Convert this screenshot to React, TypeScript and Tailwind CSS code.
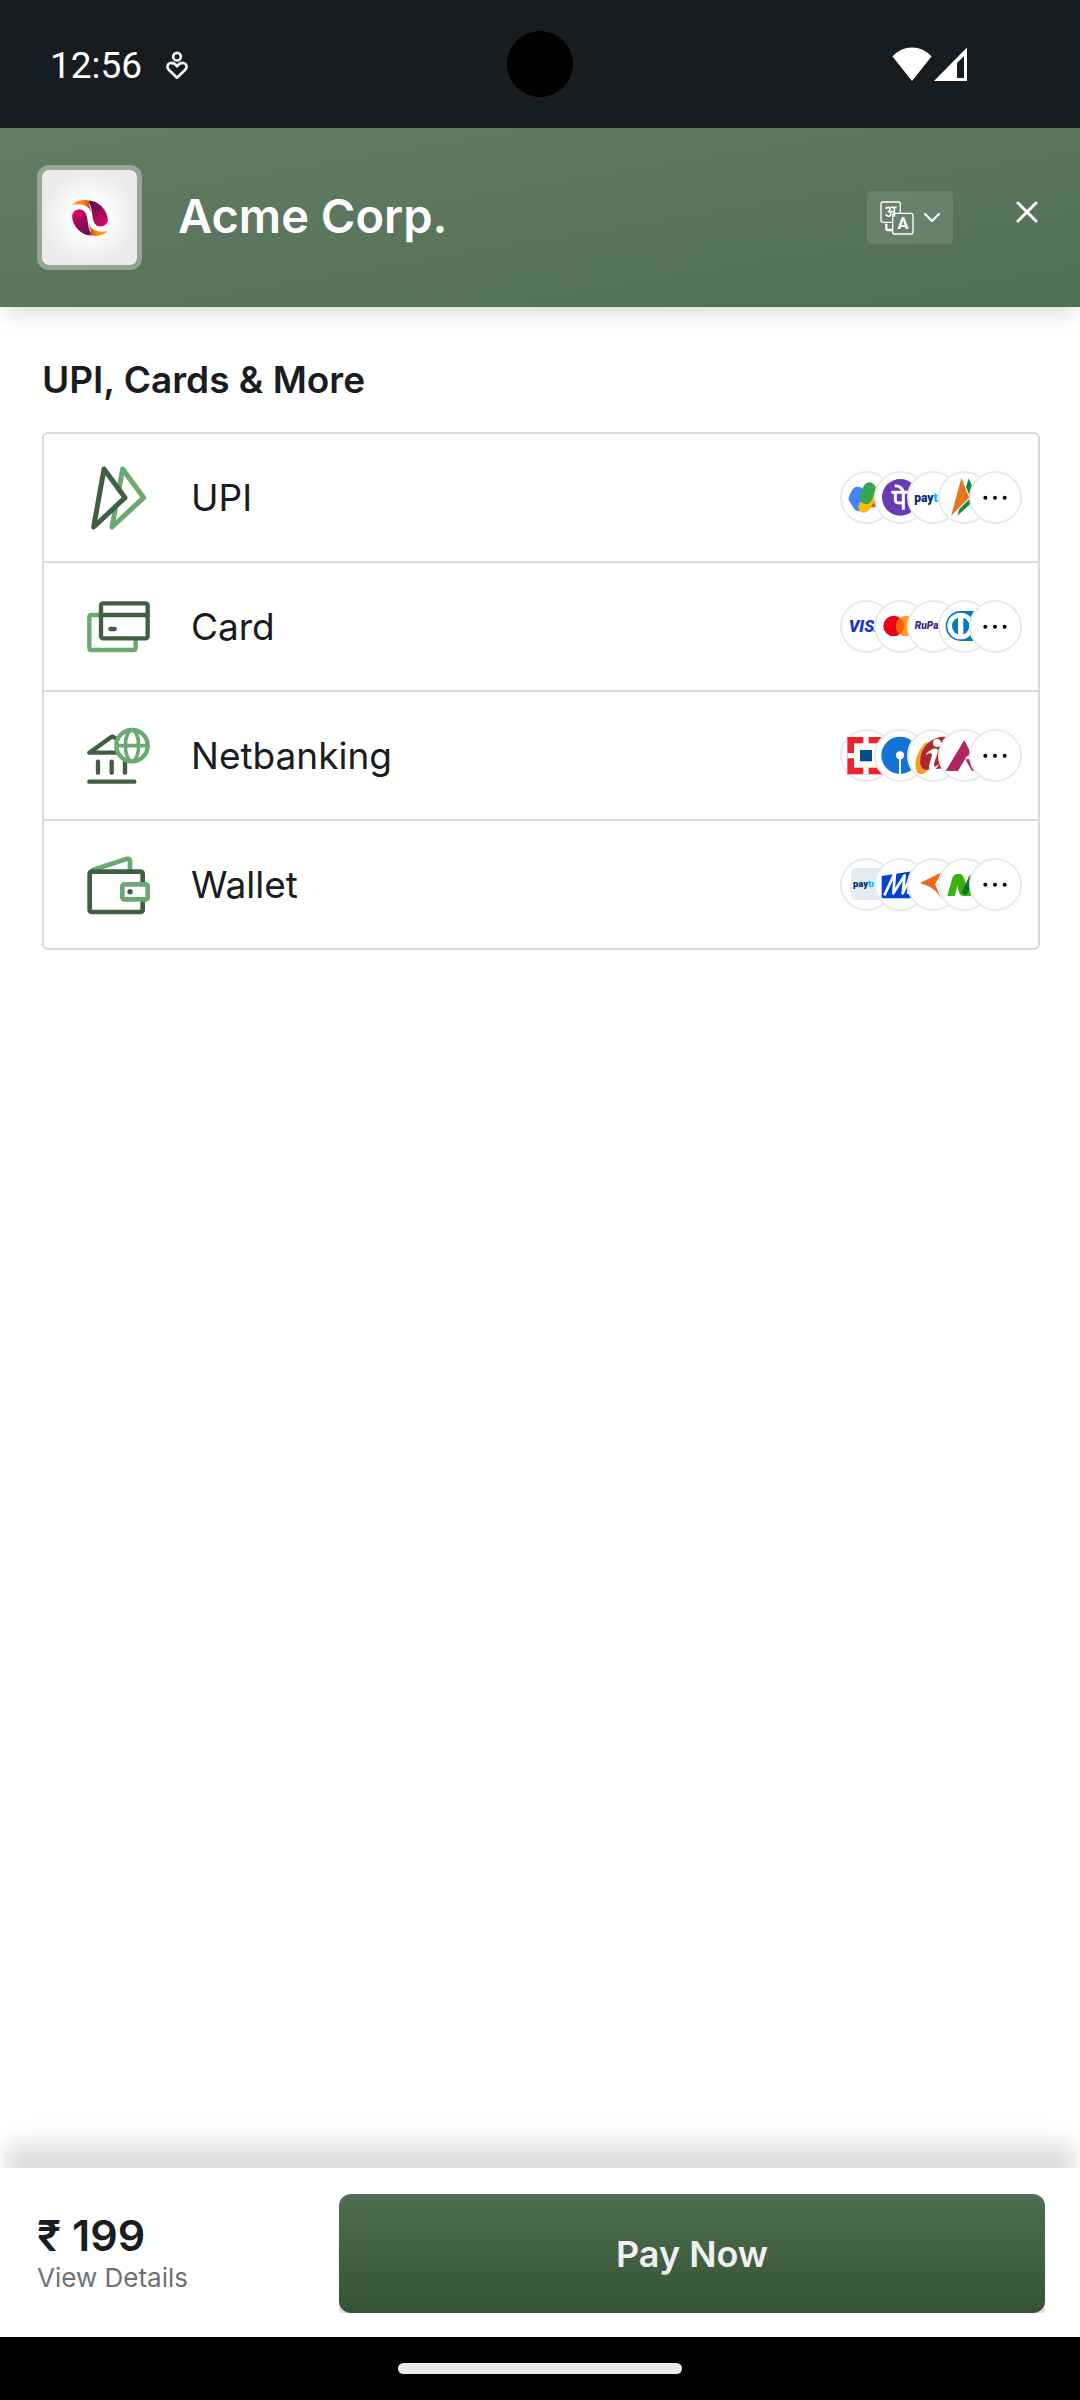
import type { ReactNode } from "react";

const DARK = "#3f6040";
const LIGHT = "#6ca871";

function HealthIcon() {
  return (
    <svg className="h-[30px] w-[22px]" viewBox="0 0 66 90" fill="none" stroke="#f4f4f4" strokeWidth="8" aria-hidden="true">
      <circle cx="33" cy="17" r="11.5" />
      <path d="M33 80 L9 57 C1 49 4 38 14 36 C23 35 28 39 33 46 C38 39 43 35 52 36 C62 38 65 49 57 57 Z" strokeLinejoin="round" />
    </svg>
  );
}

function WifiIcon() {
  return (
    <svg className="h-[34px] w-[40px]" viewBox="0 0 40 34" fill="#fff" aria-hidden="true">
      <path d="M20 34 L0.5 9.5 Q8.500 0.500 20 0.500 T39.500 9.500 Z" />
    </svg>
  );
}

function SignalIcon() {
  return (
    <svg className="h-[34px] w-[33px]" viewBox="0 0 33 34" aria-hidden="true">
      <path fill="#fff" fillRule="evenodd" d="M33 0.500 V34 H0 Z M23 16 V31 H30 V9 Z" />
    </svg>
  );
}

function BrandMark() {
  return (
    <svg className="size-9" viewBox="0 0 108 109" aria-hidden="true">
      <defs>
        <linearGradient id="brandOrange" x1="0" x2="1">
          <stop offset="0" stopColor="#ffa814" />
          <stop offset="0.6" stopColor="#fb8011" />
          <stop offset="1" stopColor="#d5281c" />
        </linearGradient>
        <linearGradient id="brandPink" x1="0.15" y1="0" x2="0.8" y2="1">
          <stop offset="0" stopColor="#52154c" />
          <stop offset="0.6" stopColor="#a3095a" />
          <stop offset="1" stopColor="#ea0067" />
        </linearGradient>
        <g id="brandHalf">
          <path fill="url(#brandPink)" d="M48 2 C80 0 108 32 108 60 C108 72 98 80 86 80 C70 80 64 66 62 52 C60 34 58 18 48 2 Z" />
          <path fill="url(#brandOrange)" d="M0 15 C14 0 36 -2 53 2 C49 14 55 26 59 38 C48 14 26 10 0 15 Z" />
        </g>
      </defs>
      <use href="#brandHalf" />
      <use href="#brandHalf" transform="rotate(180 54 54.500)" />
    </svg>
  );
}

function TranslateIcon() {
  return (
    <svg className="h-[34px] w-[34px]" viewBox="0 0 102 102" fill="none" stroke="#fff" strokeWidth="4" aria-hidden="true">
      <path d="M38 64 H9 Q3 64 3 58 V9 Q3 3 9 3 H55 Q61 3 61 9 V36" />
      <g strokeWidth="5">
        <path d="M17 23 C21 17 31 18 30 26 C30 30 26 31 23 31 C30 31 34 35 32 41 C30 48 20 47 17 39" />
        <path d="M31 32 H43 M32 19 H50 M43 19 V47" />
      </g>
      <path d="M19 68 V83 Q19 87 23 87 H37" strokeWidth="7" />
      <rect x="38" y="37" width="61" height="62" rx="6" />
      <text x="69" y="85" fill="#fff" stroke="none" textAnchor="middle" fontFamily="Roboto, sans-serif" fontWeight="700" fontSize="49">A</text>
    </svg>
  );
}

function UpiIcon() {
  return (
    <svg className="size-16" viewBox="0 0 192 192" fill="none" strokeWidth="15" strokeLinejoin="round" aria-hidden="true">
      <path stroke={LIGHT} d="M107 9 L170 95 L75 183 Z" />
      <path stroke={DARK} fill="#fff" d="M51 9 L114 95 L20 183 Z" />
    </svg>
  );
}

function CardIcon() {
  return (
    <svg className="size-16" viewBox="0 0 192 192" fill="none" strokeWidth="13" strokeLinejoin="round" strokeLinecap="round" aria-hidden="true">
      <path stroke={LIGHT} d="M36 60 H14 Q7 60 7 67 V158 Q7 165 14 165 H139 Q146 165 146 158 V132" />
      <rect stroke={DARK} fill="#fff" x="42" y="25" width="140" height="105" rx="6" />
      <path stroke={DARK} d="M42 60 H182 M70 102 H83" />
    </svg>
  );
}

function BankIcon() {
  return (
    <svg className="size-16" viewBox="0 0 192 192" fill="none" strokeWidth="13" strokeLinejoin="round" strokeLinecap="round" aria-hidden="true">
      <path stroke={DARK} d="M100 51 L77 38 L74 38 L7 86 H95 M33 113 V146 M74 113 V146 M114 113 V146 M7 173 H142" />
      <circle stroke={LIGHT} fill="#fff" cx="135" cy="65" r="47" />
      <ellipse stroke={LIGHT} strokeWidth="11" cx="135" cy="65" rx="20" ry="47" />
      <path stroke={LIGHT} strokeWidth="11" d="M88 65 H182" />
    </svg>
  );
}

function WalletIcon() {
  return (
    <svg className="size-16" viewBox="0 0 192 192" fill="none" strokeWidth="14" strokeLinejoin="round" strokeLinecap="round" aria-hidden="true">
      <path stroke={LIGHT} d="M18 51 L118 18 Q128 15 129 23 V51" />
      <rect stroke={DARK} fill="#fff" x="8" y="56" width="159" height="121" rx="6" />
      <rect stroke={LIGHT} fill="#fff" x="106" y="94" width="76" height="45" rx="6" />
      <circle cx="129" cy="116" r="8" fill={DARK} />
    </svg>
  );
}

const logos: Record<string, ReactNode> = {
  googlePay: (
    <g fill="none" strokeLinecap="round" strokeLinejoin="round">
      <path d="M106 66 L98 90" stroke="#ea4335" strokeWidth="38" />
      <path d="M72 104 L94 66" stroke="#fbbc04" strokeWidth="38" />
      <path d="M53 66 L45 82 L58 102" stroke="#4285f4" strokeWidth="38" />
      <path d="M72 108 L98 70" stroke="#fbbc04" strokeWidth="34" />
      <path d="M88 53 L78 80" stroke="#34a853" strokeWidth="38" />
    </g>
  ),
  phonePe: (
    <g fill="none">
      <circle cx="79" cy="79" r="55" fill="#673ab7" />
      <g stroke="#fff" strokeWidth="9">
        <path d="M52 64 H108 M88 64 V116 M64 64 V86 Q64 100 88 94" />
        <path d="M62 44 Q82 44 88 62" />
      </g>
    </g>
  ),
  paytm: (
    <text x="22" y="93" fontFamily="Roboto, sans-serif" fontWeight="900" fontSize="36" fill="#002e6e">
      pay<tspan fill="#00baf2">tm</tspan>
    </text>
  ),
  bhim: (
    <g>
      <path d="M92 22 L118 80 L58 134 Z" fill="#0e8a43" />
      <path d="M70 21 L94 80 L39 135 Z" fill="#fff" stroke="#fff" strokeWidth="6" />
      <path d="M70 21 L94 80 L39 135 Z" fill="#e97626" />
    </g>
  ),
  visa: (
    <text x="26" y="95" fontFamily="Roboto, sans-serif" fontWeight="900" fontStyle="italic" fontSize="50" fill="#1434cb">VISA</text>
  ),
  mastercard: (
    <g>
      <circle cx="59" cy="78" r="31" fill="#eb001b" />
      <circle cx="97" cy="78" r="31" fill="#f79e1b" />
      <path d="M78 53 A31 31 0 0 1 78 103 A31 31 0 0 1 78 53 Z" fill="#ff5f00" />
    </g>
  ),
  rupay: (
    <text x="23" y="87" fontFamily="Roboto, sans-serif" fontWeight="900" fontStyle="italic" fontSize="31" fill="#302f87">RuPay</text>
  ),
  diners: (
    <g>
      <path d="M68 33 H110 V123 H68 A45 45 0 0 1 68 33 Z" fill="#0079be" />
      <circle cx="68" cy="78" r="40" fill="#fff" />
      <circle cx="68" cy="78" r="26" fill="#0079be" />
      <path d="M60 50 H76 V106 H60 Z" fill="#fff" />
    </g>
  ),
  hdfc: (
    <g>
      <rect x="22" y="24" width="112" height="112" fill="#ed232a" />
      <rect x="42" y="43" width="72" height="73" fill="#fff" />
      <path d="M70 24 H86 V136 H70 Z M22 72 H134 V88 H22 Z" fill="#fff" />
      <rect x="60" y="63" width="36" height="34" fill="#004c8f" />
    </g>
  ),
  sbi: (
    <g>
      <circle cx="78" cy="79" r="56" fill="#1573d5" />
      <circle cx="78" cy="79" r="12" fill="#fff" />
      <rect x="75" y="86" width="6" height="52" fill="#fff" />
    </g>
  ),
  icici: (
    <g>
      <path d="M54 42 C26 74 18 110 32 132 C44 142 66 128 76 104 L66 40 Z" fill="#f99d27" />
      <path d="M124 24 C84 18 50 44 42 78 C36 104 42 122 56 122 L112 118 Z" fill="#ae282e" />
      <g fill="#fff">
        <circle cx="90" cy="42" r="12" />
        <path d="M58 74 C70 60 86 54 92 62 C96 74 76 104 82 112 C86 114 92 108 96 104 C90 124 66 134 66 116 C66 100 78 80 74 74 C70 70 64 74 58 78 Z" />
      </g>
    </g>
  ),
  axis: (
    <g fill="#ae275f">
      <path d="M79 33 L100 76 L86 82 L60 126 H23 Z" />
      <path d="M82 91 L100 90 L114 126 H102 Z" />
    </g>
  ),
  paytmWallet: (
    <g>
      <rect x="33" y="30" width="96" height="96" rx="13" fill="#e6edf2" />
      <text x="39" y="87" fontFamily="Roboto, sans-serif" fontWeight="900" fontSize="28" fill="#002e6e">
        pay<tspan fill="#00baf2">tm</tspan>
      </text>
    </g>
  ),
  mobikwik: (
    <g>
      <path d="M23 54 L124 38 V121 H26 Q23 121 23 118 Z" fill="#0044d1" />
      <path d="M31 112 L63 44 L58 106 L92 52 L86 106 L112 52 L102 108" fill="none" stroke="#fff" strokeWidth="8" strokeLinejoin="round" />
    </g>
  ),
  freecharge: <path d="M39 75 L110 40 L84 78 L104 126 C96 108 86 98 74 90 C64 84 52 80 39 75 Z" fill="#f4651f" />,
  neft: (
    <g>
      <path d="M28 114 L44 58 Q47 49 56 49 H68 L50 114 Z" fill="#3bb20c" />
      <path d="M74 114 L92 57 Q95 49 103 49 H118 L98 114 Z" fill="#3bb20c" />
      <path d="M58 49 H68 Q74 49 76 56 L86 80 L76 114 H74 Q66 114 64 106 L58 84 Z" fill="#3bb20c" />
      <path d="M86 72 L94 54 L96 92 L84 112 L70 104 Z" fill="#0a7530" />
    </g>
  ),
  more: (
    <g fill="#000">
      <circle cx="49" cy="80" r="6" />
      <circle cx="78" cy="80" r="6" />
      <circle cx="107" cy="80" r="6" />
    </g>
  ),
};

const overlap = ["", "-ml-[19px]", "-ml-[20px]", "-ml-[22px]", "-ml-[22px]"];

function LogoStack({ names }: { names: string[] }) {
  return (
    <span className="flex" aria-hidden="true">
      {[...names, "more"].map((name, i) => (
        <svg key={name} className={`size-[53px] shrink-0 ${overlap[i]}`} viewBox="0 0 159 159">
          <circle cx="79.5" cy="79.5" r="76.500" fill="#fff" stroke="#e7eaef" strokeWidth="6" />
          {logos[name]}
        </svg>
      ))}
    </span>
  );
}

const methods = [
  { label: "UPI", icon: <UpiIcon />, brands: ["googlePay", "phonePe", "paytm", "bhim"] },
  { label: "Card", icon: <CardIcon />, brands: ["visa", "mastercard", "rupay", "diners"] },
  { label: "Netbanking", icon: <BankIcon />, brands: ["hdfc", "sbi", "icici", "axis"] },
  { label: "Wallet", icon: <WalletIcon />, brands: ["paytmWallet", "mobikwik", "freecharge", "neft"] },
];

export default function App() {
  return (
    <div className="flex min-h-screen flex-col bg-white font-['Inter',sans-serif] text-[#191c20]">
      <div className="relative flex h-32 items-center justify-between bg-[#191c1f] pr-[113px] pl-[50px]">
        <div className="flex items-center gap-6 pt-1">
          <time className="font-['Roboto',sans-serif] text-[37px] text-white">12:56</time>
          <HealthIcon />
        </div>
        <div className="absolute top-[31px] left-1/2 size-[66px] -translate-x-1/2 rounded-full bg-black" />
        <div className="flex gap-0.5">
          <WifiIcon />
          <SignalIcon />
        </div>
      </div>

      <header className="relative flex items-center bg-linear-to-br from-[#627d63] to-[#526e54] py-[37px] pr-[38px] pl-[37px] shadow-[0_12px_20px_-6px_rgba(20,30,26,0.16)]">
        <div className="flex size-[105px] items-center justify-center rounded-xl border-5 border-white/35 bg-[radial-gradient(circle,#ffffff_0%,#fafafa_35%,#ebebeb_70%)] bg-clip-padding">
          <BrandMark />
        </div>
        <h1 className="ml-9 flex-1 pb-1 text-[47px] leading-none font-semibold text-white">Acme Corp.</h1>
        <button type="button" aria-label="Change language" className="flex h-[53px] w-[86px] items-center justify-between rounded bg-white/10 px-[13px]">
          <TranslateIcon />
          <svg className="h-[11px] w-4" viewBox="0 0 16 11" fill="none" stroke="#fff" strokeWidth="2" strokeLinecap="round" strokeLinejoin="round" aria-hidden="true">
            <path d="M1 2 L8 9 L15 2" />
          </svg>
        </button>
        <button type="button" aria-label="Close" className="mb-3 ml-[59px] p-1">
          <svg className="size-[22px]" viewBox="0 0 22 22" stroke="#fff" strokeWidth="3" strokeLinecap="round" aria-hidden="true">
            <path d="M2 2 L20 20 M20 2 L2 20" />
          </svg>
        </button>
      </header>

      <main className="flex-1 pt-[50px] pr-10 pl-[42px]">
        <h2 className="text-[37px] leading-[46px] font-semibold">UPI, Cards &amp; More</h2>
        <ul className="mt-[29px] rounded-md border-2 border-[#d9d9d9]">
          {methods.map((m) => (
            <li key={m.label} className="border-b-2 border-[#d9d9d9] last:border-b-0">
              <button type="button" className="flex h-[127px] w-full items-center pr-4 pl-[43px] text-left">
                {m.icon}
                <span className="ml-10 flex-1 text-[37px]">{m.label}</span>
                <LogoStack names={m.brands} />
              </button>
            </li>
          ))}
        </ul>
      </main>

      <footer className="relative flex items-center bg-white pt-[26px] pr-[35px] pb-6 pl-[37px] shadow-[0_-28px_20px_-6px_rgba(20,30,26,0.12),0_-40px_30px_-8px_rgba(0,0,0,0.03)]">
        <div className="w-[302px]">
          <p className="text-[43px] leading-[48px] font-semibold">₹ 199</p>
          <button type="button" className="block text-[26px] leading-[38px] text-[#6f7274]">View Details</button>
        </div>
        <div className="flex-1 bg-[linear-gradient(to_top,#e4e4e4_12px,transparent_12px)]">
          <button type="button" className="block h-[119px] w-full rounded-xl bg-linear-to-b from-[#4f6f50] to-[#355235] text-[36px] font-semibold text-[#f0f0f0]">
            Pay Now
          </button>
        </div>
      </footer>

      <div className="flex h-[63px] items-center justify-center bg-black">
        <div className="h-[11px] w-[284px] rounded-full bg-[#ebebeb]" />
      </div>
    </div>
  );
}
